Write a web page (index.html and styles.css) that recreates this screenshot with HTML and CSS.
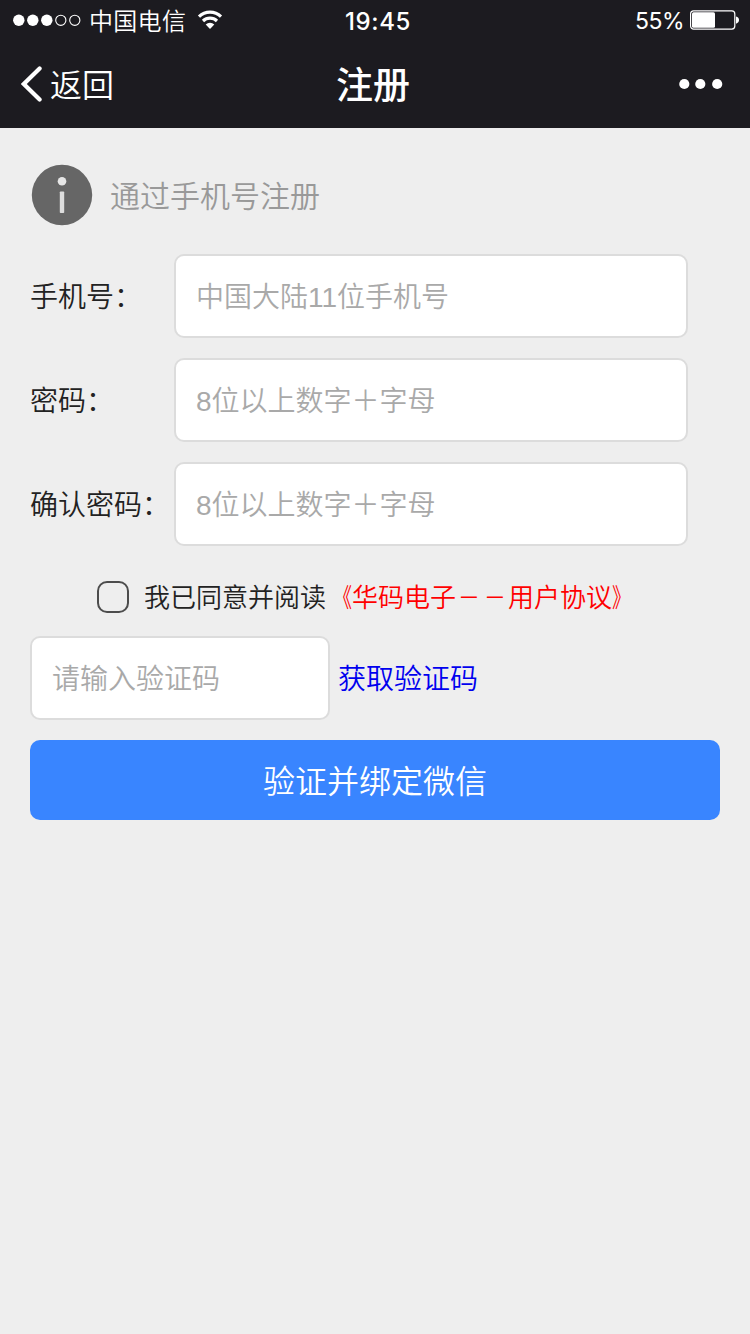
FILE: index.html
```html
<!DOCTYPE html>
<html lang="zh-CN">
<head>
<meta charset="utf-8">
<title>注册</title>
<link rel="stylesheet" href="styles.css">
</head>
<body>
<header class="top">
  <div class="status">
    <div class="status-left">
      <svg class="signal" width="68" height="14" viewBox="0 0 68 14">
        <g fill="#fff"><circle cx="5.8" cy="7.3" r="5.7"/><circle cx="19.8" cy="7.3" r="5.7"/><circle cx="33.8" cy="7.3" r="5.7"/></g>
        <g fill="none" stroke="#fff" stroke-width="1.1"><circle cx="47.8" cy="7.3" r="5.1"/><circle cx="61.8" cy="7.3" r="5.1"/></g>
      </svg>
      <span class="carrier">中国电信</span>
      <svg class="wifi" width="26" height="20" viewBox="0 0 26 20">
        <g fill="none" stroke="#fff" stroke-width="3.2"><path d="M2 6.6A16 16 0 0 1 24 6.6"/><path d="M6 11A10.2 10.2 0 0 1 20 11"/></g>
        <path fill="#fff" d="M13 19L8.7 14.6A6.2 6.2 0 0 1 17.3 14.6Z"/>
      </svg>
    </div>
    <time class="clock">19:45</time>
    <div class="status-right">
      <span class="percent">55%</span>
      <svg class="battery" width="50" height="20" viewBox="0 0 50 20">
        <rect x=".6" y=".9" width="44.2" height="18.2" rx="3" fill="none" stroke="#fff" stroke-width="1.2"/>
        <rect x="2" y="2.3" width="23" height="15.4" rx="1.5" fill="#fff"/>
        <path fill="#fff" d="M46 6.5q3 .8 3 3.6t-3 3.6Z"/>
      </svg>
    </div>
  </div>
  <nav class="nav">
    <a class="back">
      <svg width="22" height="36" viewBox="0 0 22 36"><path d="M18.6 2.4L2.8 18L18.6 33.6" fill="none" stroke="#fff" stroke-width="4.2" stroke-linecap="round"/></svg>
      <span>返回</span>
    </a>
    <h1 class="title">注册</h1>
    <svg class="more" width="44" height="12" viewBox="0 0 44 12" fill="#fff"><circle cx="5.3" cy="6" r="5.1"/><circle cx="21.3" cy="6" r="5.1"/><circle cx="38.2" cy="6" r="5.1"/></svg>
  </nav>
</header>
<main class="content">
  <div class="intro">
    <svg width="62" height="62" viewBox="0 0 62 62"><circle cx="31" cy="31" r="30.2" fill="#666"/><circle cx="31" cy="17.2" r="4.3" fill="#e6e6e6"/><rect x="28.8" y="27.5" width="4.4" height="21.5" rx=".8" fill="#ddd"/></svg>
    <span class="intro-text">通过手机号注册</span>
  </div>
  <form class="form">
    <label class="row"><span class="label">手机号：</span><input class="field" type="tel" placeholder="中国大陆11位手机号"></label>
    <label class="row"><span class="label">密码：</span><input class="field" type="password" placeholder="8位以上数字＋字母"></label>
    <label class="row"><span class="label">确认密码：</span><input class="field" type="password" placeholder="8位以上数字＋字母"></label>
    <div class="agree"><input class="check" type="checkbox"><span class="agree-text">我已同意并阅读<a class="terms"><span class="mark open">《</span>华码电子<span class="mark dash">－</span><span class="mark dash">－</span>用户协议<span class="mark close">》</span></a></span></div>
    <div class="verify"><input class="field code" type="text" placeholder="请输入验证码"><a class="send">获取验证码</a></div>
    <button class="submit" type="button">验证并绑定微信</button>
  </form>
</main>
</body>
</html>
```
FILE: styles.css
```css
* { box-sizing: border-box; }
body {
  margin: 0;
  min-height: 1334px;
  background: #eee;
  color: #222;
  font-family: "Liberation Sans", "Noto Sans CJK SC", sans-serif;
  font-weight: 350;
  font-size: 28px;
}
svg { display: block; flex: none; }
.top { height: 128px; background: #1c1b20; color: #fff; }
.status, .nav { display: grid; grid-template-columns: 1fr auto 1fr; align-items: center; }
.status { height: 40px; padding: 0 10px 0 13px; font-family: Inter, "Noto Sans CJK SC", sans-serif; }
.status-left, .status-right { display: flex; align-items: center; }
.carrier { margin-left: 8px; padding-top: 3px; font-size: 24px; line-height: 37px; letter-spacing: .3px; }
.wifi { margin-left: 10.5px; }
.clock { padding: 2px 0 0 3px; font-size: 24px; font-weight: 500; letter-spacing: .6px; }
.status-right { justify-content: flex-end; gap: 6px; }
.percent { padding-top: 1px; font-size: 23px; font-weight: 400; letter-spacing: -.5px; }
.nav { height: 88px; padding: 0 27px 0 21px; }
.back { display: flex; align-items: center; gap: 7px; font-size: 32px; }
.back span { padding-bottom: 2px; }
.title { margin: 0; padding: 4px 0 0 2px; font-size: 37px; font-weight: 500; line-height: 83px; }
.more { justify-self: end; }
.content { padding: 36px 30px 0; }
.intro { display: flex; align-items: center; gap: 17px; height: 62px; padding-left: 1px; color: #999; font-size: 30px; }
.intro-text { padding-bottom: 2px; }
.form { display: flex; flex-direction: column; padding-top: 28px; }
.row { display: grid; grid-template-columns: 144px 514px; align-items: center; height: 84px; margin-bottom: 20px; }
.label { padding-bottom: 2px; white-space: nowrap; }
.field {
  width: 100%;
  height: 84px;
  padding: 4px 20px 0;
  border: 2px solid #dcdcdc;
  border-radius: 10px;
  background: #fff;
  color: #222;
  font: inherit;
}
.field::placeholder { color: #a9a9a9; opacity: 1; }
.agree { display: flex; align-items: center; gap: 15px; height: 62px; margin-bottom: 8px; padding-left: 67px; font-size: 26px; white-space: nowrap; }
.agree-text { padding-bottom: 3px; }
.check { appearance: none; width: 32px; height: 32px; margin: 0; border: 2px solid #4c4c4c; border-radius: 10px; }
.terms { color: #f00; }
.mark { display: inline-block; }
.open { transform: scaleX(.72); transform-origin: right; }
.close { transform: scaleX(.72); transform-origin: left; }
.dash { transform: scaleX(.84); }
.verify { display: flex; align-items: center; gap: 8px; height: 84px; margin-bottom: 20px; }
.code { width: 300px; }
.send { padding-bottom: 2px; color: #00e; }
.submit { height: 80px; padding: 0 0 2px; border: 0; border-radius: 10px; background: #3985ff; color: #fff; font: inherit; font-size: 32px; }
```
